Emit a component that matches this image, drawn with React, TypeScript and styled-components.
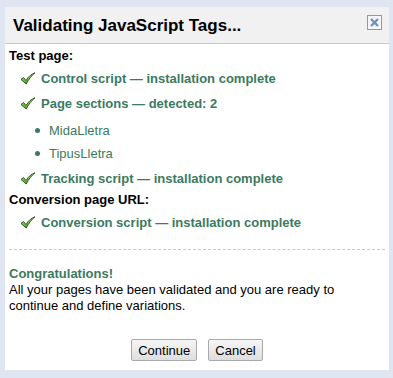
import * as React from 'react'
import styled, { createGlobalStyle } from 'styled-components'

// ___________________________________________________________________

const Global = createGlobalStyle`
  html, body {
    margin: 0;
    padding: 0;
    background: #dfe5f1;
    font-family: "Liberation Sans", Arial, sans-serif;
  }
`

const Frame = styled.div`
  width: 393px;
  height: 378px;
  box-sizing: border-box;
  padding: 7px 4px 8px 5px;
  background: #dfe5f1;
`

const Dialog = styled.div`
  height: 100%;
  display: flex;
  flex-direction: column;
  background: #fff;
`

const Header = styled.div`
  height: 36px;
  flex: none;
  display: flex;
  align-items: center;
  justify-content: space-between;
  padding: 0 7px 0 8px;
  background: #f1f1f1;
  border-bottom: 1px solid #c9c9c9;
`

const Title = styled.h1`
  margin: 0;
  font-size: 17px;
  font-weight: bold;
  color: #000;
  padding-top: 1px;
`

const Close = styled.button`
  width: 15px;
  height: 15px;
  padding: 0;
  margin-top: -5px;
  border: 1px solid #7f9cc3;
  background: #f4f6fa;
  display: flex;
  align-items: center;
  justify-content: center;
`

const Body = styled.div`
  flex: 1;
  padding: 3px 4px 0 4px;
  font-size: 13px;
  color: #000;
`

const Heading = styled.div`
  font-weight: bold;
  line-height: 17px;
  margin-bottom: 2px;
`

const Check = styled.div`
  display: flex;
  align-items: center;
  gap: 5px;
  padding-left: 11px;
  height: 24px;
  margin: 1px 0;
  font-weight: bold;
  color: #3b7a60;
  svg {
    flex: none;
  }
`

const Bullets = styled.ul`
  margin: 4px 0 0 0;
  padding: 0 0 0 26px;
  list-style: none;
`

const Bullet = styled.li`
  display: flex;
  align-items: center;
  gap: 9px;
  height: 23px;
  color: #3b7a60;
  &::before {
    content: '';
    width: 5px;
    height: 5px;
    border-radius: 50%;
    background: #3b7a60;
  }
`

const Rule = styled.hr`
  margin: 15px 0 0 0;
  border: 0;
  border-top: 1px dashed #c8c8c8;
`

const Congrats = styled.div`
  margin-top: 16px;
  font-weight: bold;
  color: #3b7a60;
  line-height: 16px;
`

const Note = styled.p`
  margin: 0;
  line-height: 16px;
`

const Actions = styled.div`
  display: flex;
  justify-content: center;
  gap: 11px;
  margin-top: 25px;
`

const Button = styled.button`
  height: 22px;
  padding: 0 6px;
  font-family: "Liberation Sans", Arial, sans-serif;
  font-size: 13px;
  color: #000;
  border: 1px solid #a9a9a9;
  border-radius: 2px;
  background: linear-gradient(#f6f6f6, #dedede);
`

const CheckIcon = () => (
  <svg width="16" height="13" viewBox="0 0 16 13">
    <defs>
      <linearGradient id="ck" x1="0" y1="0" x2="0" y2="1">
        <stop offset="0" stopColor="#b6ea70" />
        <stop offset="1" stopColor="#4fa02a" />
      </linearGradient>
    </defs>
    <path
      d="M1 7.5 L3.5 5.5 L6 8.5 C8.5 4.5 11.5 2 15 0.8 C11.5 3.5 8.5 7.5 6.2 12 Z"
      fill="url(#ck)"
      stroke="#2f5b22"
      strokeWidth="1"
      strokeLinejoin="round"
    />
  </svg>
)

const XIcon = () => (
  <svg width="11" height="11" viewBox="0 0 11 11">
    <path d="M2 2 L9 9 M9 2 L2 9" stroke="#7391bd" strokeWidth="2.4" />
  </svg>
)

const Item = ({ children }: { children: React.ReactNode }) => (
  <Check>
    <CheckIcon />
    <span>{children}</span>
  </Check>
)

const App = () => (
  <Frame>
    <Global />
    <Dialog>
      <Header>
        <Title>Validating JavaScript Tags...</Title>
        <Close aria-label="Close">
          <XIcon />
        </Close>
      </Header>
      <Body>
        <Heading>Test page:</Heading>
        <Item>Control script — installation complete</Item>
        <Item>Page sections — detected: 2</Item>
        <Bullets>
          <Bullet>MidaLletra</Bullet>
          <Bullet>TipusLletra</Bullet>
        </Bullets>
        <Item>Tracking script — installation complete</Item>
        <Heading>Conversion page URL:</Heading>
        <Item>Conversion script — installation complete</Item>
        <Rule />
        <Congrats>Congratulations!</Congrats>
        <Note>
          All your pages have been validated and you are ready to continue and
          define variations.
        </Note>
        <Actions>
          <Button>Continue</Button>
          <Button>Cancel</Button>
        </Actions>
      </Body>
    </Dialog>
  </Frame>
)

export default App
